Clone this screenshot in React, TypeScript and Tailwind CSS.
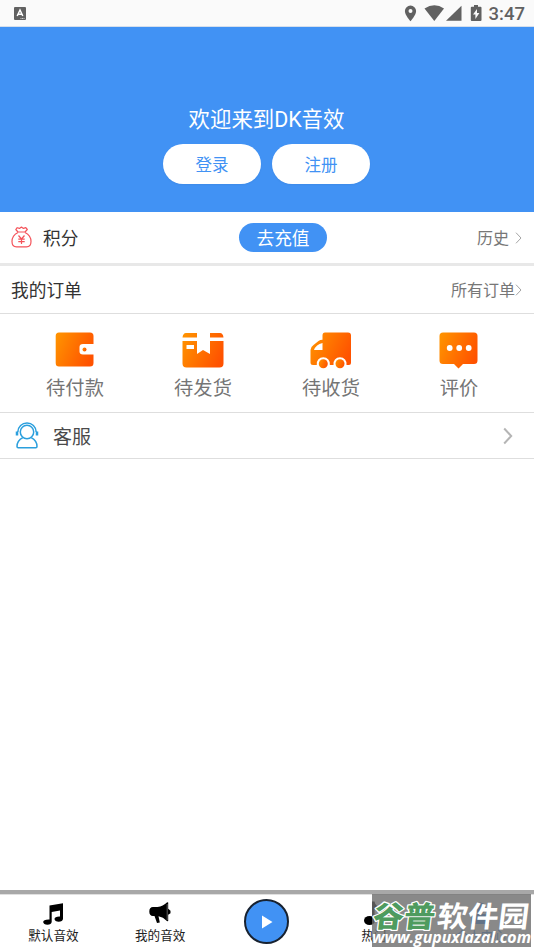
import React from 'react'

const orders = [
  { label: '待付款', icon: 'wallet' },
  { label: '待发货', icon: 'box' },
  { label: '待收货', icon: 'truck' },
  { label: '评价', icon: 'comment' },
]

function StatusBar() {
  return (
    <div className="flex h-[27px] shrink-0 items-center border-b border-[#d5dfec] bg-[#fafafa] pl-[14px] pr-[9px] text-[#616161]">
      <svg width="12" height="13" viewBox="0 0 12 13" className="mt-px">
        <rect width="12" height="13" rx="1" fill="#616161" />
        <path d="M3.2 9L6 3l2.8 6M4.3 7.2h3.4" fill="none" stroke="#fff" strokeWidth="1.5" />
        <path d="M6.5 11.5h4" stroke="#ccc" strokeDasharray="1 .5" />
      </svg>
      <div className="ml-auto flex items-center">
        <svg width="78" height="18" viewBox="0 0 78 18" fill="currentColor">
          <path fillRule="evenodd" d="M6.500 1.500a5.600 5.600 0 0 0-5.600 5.600C.9 11.400 6.500 17.300 6.500 17.300s5.600-5.900 5.600-10.200A5.600 5.600 0 0 0 6.500 1.500zm0 3.500a2 2 0 1 1 0 4 2 2 0 0 1 0-4z" />
          <path d="M20.500 4.500q10-6.500 19.500 0L30.300 17z" />
          <path d="M57.500 1.800v15H42z" />
          <path fillRule="evenodd" d="M70 1h4v1.700h2.500q1 0 1 1V16q0 1-1 1h-8.700q-1 0-1-1V3.700q0-1 1-1H70zm3 4l-4 5.500h2.400V15l4-6h-2.400z" />
        </svg>
        <span className="ml-[7px] mt-[2px] font-['Roboto'] text-[18.5px] font-medium leading-none">3:47</span>
      </div>
    </div>
  )
}

function OrderIcon({ name }: { name: string }) {
  return (
    <svg width="44" height="40" viewBox="0 0 44 40">
      <defs>
        <linearGradient id={name} x1="0" y1="0.2" x2="1" y2="0.6">
          <stop offset="0" stopColor="#ff9100" />
          <stop offset="1" stopColor="#ff5200" />
        </linearGradient>
      </defs>
      <g fill={`url(#${name})`}>
        {name === 'wallet' && (
          <path d="M6 2.500h31q3.500 0 3.500 3.500v8H30q-3.500 0-3.500 3v4.500q0 3 3.500 3h10.500V33q0 3.500-3.500 3.500H6q-3.300 0-3.300-3.500V6q0-3.500 3.300-3.500z" />
        )}
        {name === 'wallet' && <circle cx="31.500" cy="19.400" r="2" />}
        {name === 'box' && (
          <path
            fillRule="evenodd"
            d="M5 3h11v4.500H1.500Q2 3 5 3zm24 0h10q3 0 3.500 4.500H29zM1.500 11H16v13l6-4 7 4V11h13.500v22.500q0 4-4 4H5.500q-4 0-4-4zm4 4v4h7.500v-4z"
          />
        )}
        {name === 'truck' && (
          <>
            <path
              fillRule="evenodd"
              d="M16 2.500h23q3 0 3 3V33q0 2-2 2h-2.500a6.600 6.600 0 1 0-13 0h-3.700a6.600 6.600 0 1 0-13 0H4q-2.500 0-2.500-2.500V20q0-3 3-5l5-4q1.500-1.300 4-1.300V5.500q0-3 2.500-3zM13.500 13Q7 14.500 5 20h8.500z"
            />
            <circle cx="14.300" cy="33.800" r="4.500" />
            <circle cx="31" cy="33.800" r="4.500" />
          </>
        )}
        {name === 'comment' && (
          <path d="M6 2.500h31q3.500 0 3.500 3.500v24.500q0 3.500-3.500 3.500H26l-4.500 4.500L17 34H6q-3.500 0-3.500-3.500V6Q2.500 2.500 6 2.500z" />
        )}
      </g>
      {name === 'comment' && (
        <g fill="#fff">
          <circle cx="12.700" cy="18" r="2.900" />
          <circle cx="22.200" cy="18" r="2.900" />
          <circle cx="31.700" cy="18" r="2.900" />
        </g>
      )}
    </svg>
  )
}

function Chevron({ big = false }: { big?: boolean }) {
  return big ? (
    <svg width="10" height="18" viewBox="0 0 10 18" fill="none" stroke="#b5b5b5" strokeWidth="2">
      <path d="M1.200 1.500l7 7.500-7 7.500" />
    </svg>
  ) : (
    <svg width="7" height="12" viewBox="0 0 7 12" fill="none" stroke="#a5a5a5" strokeWidth="1">
      <path d="M1 .7L6 6l-5 5.300" />
    </svg>
  )
}

function MoneyBag() {
  return (
    <svg width="21" height="22" viewBox="0 0 21 22" fill="none" stroke="#f4535a" strokeWidth="1.200" strokeLinejoin="round">
      <path d="M7 6L4.800 3.500 6.200 1.700l2.300.7L10.400 1l2 1.400 2.400-.7 1.500 1.800L14 6zM7 6.500C3 8.500 1 12.300 1 15.500c0 3.500 1.500 5.300 4.500 5.300h10c3 0 4.500-1.800 4.500-5.300 0-3.200-2-7-6-9" />
      <path d="M7.500 9.500l3 3.500 3-3.500M10.500 13v5M7.300 13.200h6.400M7.300 15.600h6.400" />
    </svg>
  )
}

function Support() {
  return (
    <svg width="24" height="27" viewBox="0 0 24 27" fill="none" stroke="#2b9fdd" strokeWidth="1.500">
      <circle cx="12" cy="10" r="6.700" />
      <path d="M2.800 10C3 4.500 7 1 12 1s9 3.500 9.200 9M7.800 15.600C4 17.500 2 20.500 2 24.500q0 1.200 1.200 1.200h17.600q1.200 0 1.200-1.200c0-4-2-7-5.800-8.900" />
      <path d="M2 9.500v4M22 9.500v4" strokeWidth="2.500" />
    </svg>
  )
}

function NoteIcon() {
  return (
    <svg width="21" height="22" viewBox="0 0 21 22" className="ml-px">
      <path d="M6.500 2.500L20 .3v15.400c0 1.900-1.900 3-4.300 3s-4.200-1.200-4.200-2.700 2.100-2.800 5.500-2.600V7.500L8.700 9v9.800c0 1.900-1.900 3-4.300 3S.2 20.600.2 19.100s2.100-2.800 6.300-2.600z" />
    </svg>
  )
}

function HornIcon() {
  return (
    <svg width="22" height="22" viewBox="0 0 22 22">
      <path d="M8.500 5Q14 4.500 18.200.3l1 .3v6.200l2.300 2v2.400l-2.300 1.500V19l-1 .3Q14 15 9.500 14.300l1.300 6.200-2.800.5-2.500-7H4Q.3 13.800.3 9.500T4 5z" />
      <path d="M18.200 2v16" stroke="#888" strokeWidth=".7" />
    </svg>
  )
}

function Watermark() {
  return (
    <div className="absolute left-[372px] top-[894px] h-[53px] w-[159px] bg-[#6c6c6c]/80">
      <svg width="162" height="53" viewBox="0 0 162 53" className="overflow-visible">
        <g
          transform="skewX(-7)"
          fontFamily="Noto Sans CJK SC, sans-serif"
          fontSize="29"
          fontWeight="900"
          stroke="#fff"
          strokeLinejoin="round"
          paintOrder="stroke"
        >
          <text x="4" y="32.500" fill="#4e9b5f" strokeWidth="2.500" textLength="62" lengthAdjust="spacingAndGlyphs">谷普</text>
          <text x="68" y="32.500" fill="#fff" strokeWidth="0" fontWeight="700" textLength="92" lengthAdjust="spacingAndGlyphs">软件园</text>
        </g>
        <text
          x="0"
          y="48.500"
          fill="#fff"
          fontFamily="Open Sans, sans-serif"
          fontSize="16"
          fontStyle="italic"
          fontWeight="700"
          textLength="159"
          lengthAdjust="spacingAndGlyphs"
        >
          www.gupuxlazal.com
        </text>
      </svg>
    </div>
  )
}

function TabBar() {
  return (
    <div className="mt-auto grid h-[60px] shrink-0 grid-cols-5 border-t-4 border-[#a8a8a8] bg-white text-[12.600px] leading-[16px] text-[#222]">
      <div className="flex flex-col items-center border-t border-[#e0e0e0] pt-[8px]">
        <NoteIcon />
        <span className="mt-[3px]">默认音效</span>
      </div>
      <div className="flex flex-col items-center border-t border-[#e0e0e0] pt-[7px]">
        <HornIcon />
        <span className="mt-[4px]">我的音效</span>
      </div>
      <div className="flex justify-center border-t border-[#e0e0e0] pt-[4px]">
        <div className="flex size-[45px] items-center justify-center rounded-full border-2 border-[#182230] bg-[#4192f4]">
          <svg width="12" height="14" viewBox="0 0 12 14" fill="#fff">
            <path d="M1 .5L11.500 7 1 13.500z" />
          </svg>
        </div>
      </div>
      <div className="flex flex-col items-center border-t border-[#e0e0e0] pt-[5px]">
        <svg width="21" height="26" viewBox="0 0 21 26">
          <ellipse cx="6.500" cy="20.500" rx="5.500" ry="4.500" />
          <path d="M9 20V1.500h2.500Q12 6 19 8.500v4Q14 10 11.500 10v10z" />
        </svg>
        <span className="mt-[2px]">热门</span>
      </div>
      <div className="flex flex-col items-center border-t border-[#e0e0e0] pt-[7px] text-[#4192f4]">
        <svg width="21" height="22" viewBox="0 0 21 22" fill="#4192f4">
          <circle cx="10.500" cy="6" r="5.500" />
          <path d="M1 22v-4q0-6 6-6h7q6 0 6 6v4z" />
        </svg>
        <span className="mt-[4px]">个人中心</span>
      </div>
    </div>
  )
}

export default function App() {
  return (
    <div className="relative flex h-[950px] w-[534px] flex-col overflow-hidden bg-white font-['Roboto','Noto_Sans_CJK_SC',sans-serif]">
      <StatusBar />

      {/* Welcome banner */}
      <div className="flex h-[185px] shrink-0 flex-col items-center bg-[#4192f4] pr-px pt-[77px]">
        <h1 className="text-[21.400px] leading-[32px] text-white">欢迎来到DK音效</h1>
        <div className="mt-[8px] flex gap-[11px] text-[16.500px] text-[#4192f4]">
          <button className="h-10 w-[98px] rounded-full bg-white pt-[5px] shadow-xs">登录</button>
          <button className="h-10 w-[98px] rounded-full bg-white pt-[5px] shadow-xs">注册</button>
        </div>
      </div>

      {/* Points */}
      <div className="grid h-[54px] shrink-0 grid-cols-[239px_88px_1fr] items-center border-b-[3px] border-[#e8e8e8] pr-[12px]">
        <div className="flex items-center gap-[11px] pl-[11px] text-[17.700px] text-[#333]">
          <MoneyBag />
          <span className="pt-[3px]">积分</span>
        </div>
        <button className="h-[29px] rounded-full bg-[#4192f4] pt-[3px] text-[17.700px] leading-[26px] text-white">去充值</button>
        <div className="flex items-center justify-end gap-[6px] text-[16px] text-[#777]">
          <span className="pt-[3px]">历史</span>
          <Chevron />
        </div>
      </div>

      {/* Orders */}
      <div className="flex h-[48px] shrink-0 items-center justify-between border-b border-[#dedede] pl-[11px] pr-[12px]">
        <span className="pt-[3px] text-[17.700px] text-[#333]">我的订单</span>
        <div className="flex items-center text-[16px] text-[#777]">
          <span className="pt-[3px]">所有订单</span>
          <Chevron />
        </div>
      </div>
      <div className="grid h-[99px] shrink-0 grid-cols-4 border-b border-[#dedede] px-[11px] pt-[16px]">
        {orders.map((order) => (
          <div key={order.icon} className="flex flex-col items-center">
            <OrderIcon name={order.icon} />
            <span className="mt-[5px] text-[19.300px] leading-[28px] text-[#757575]">{order.label}</span>
          </div>
        ))}
      </div>

      {/* Customer service */}
      <div className="flex h-[46px] shrink-0 items-center border-b border-[#dedede] pl-[15px] pr-[21px]">
        <Support />
        <span className="ml-[14px] pt-[5px] text-[19px] text-[#4a4a4a]">客服</span>
        <div className="ml-auto">
          <Chevron big />
        </div>
      </div>

      <TabBar />
      <Watermark />
    </div>
  )
}
